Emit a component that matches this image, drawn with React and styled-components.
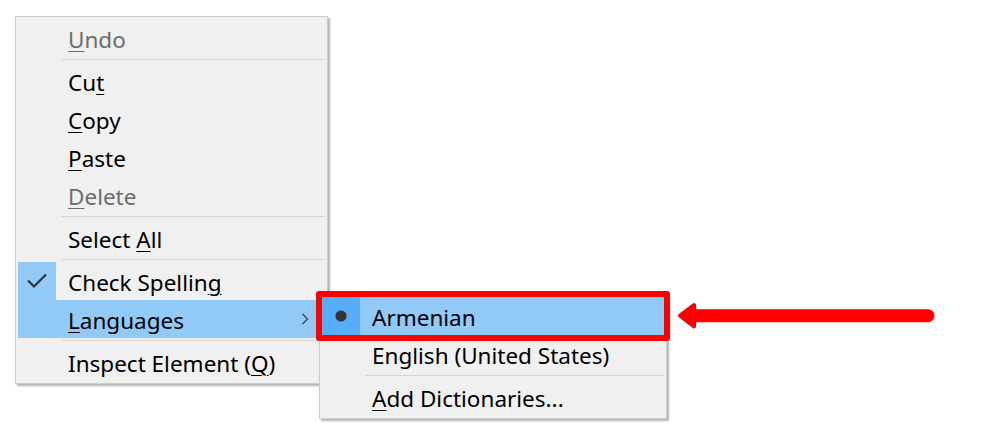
import React from "react";
import styled, { createGlobalStyle } from "styled-components";

const GlobalStyle = createGlobalStyle`
  body {
    margin: 0;
    background: #fff;
    font-family: "Noto Sans", "Open Sans", sans-serif;
  }
`;

const mainItems = [
  { label: "Undo", key: 0, disabled: true },
  { sep: true },
  { label: "Cut", key: 2 },
  { label: "Copy", key: 0 },
  { label: "Paste", key: 0 },
  { label: "Delete", key: 0, disabled: true },
  { sep: true },
  { label: "Select All", key: 7 },
  { sep: true },
  { label: "Check Spelling", key: 13, checked: true },
  { label: "Languages", key: 0, hover: true, submenu: true },
  { sep: true },
  { label: "Inspect Element (Q)", key: 17 },
];

const subItems = [
  { label: "Armenian", radio: true, hover: true, boxed: true },
  { label: "English (United States)" },
  { sep: true },
  { label: "Add Dictionaries...", key: 0 },
];

const Stage = styled.div`
  position: relative;
  width: 984px;
  height: 436px;
  box-sizing: border-box;
  padding: 16px 0 0 15px;
`;

const Menu = styled.div`
  width: 313px;
  box-sizing: border-box;
  padding: 2px;
  background: #f0f0f0;
  border: 1px solid #cccccc;
  box-shadow: 2px 2px 2px rgba(0, 0, 0, 0.3);
`;

const SubMenu = styled(Menu)`
  position: absolute;
  left: 319px;
  top: 294px;
  width: 348px;
`;

const Item = styled.div`
  position: relative;
  display: flex;
  height: 38px;
  background: ${(p) => (p.$hover ? "#91c9f7" : "transparent")};
`;

const Gutter = styled.div`
  flex: none;
  width: 38px;
  display: flex;
  align-items: center;
  justify-content: center;
  background: ${(p) => p.$bg || "transparent"};
`;

const Label = styled.div`
  flex: 1;
  padding: 3px 0 0 12px;
  line-height: 35px;
  font-size: 22.5px;
  white-space: nowrap;
  color: ${(p) => (p.$disabled ? "#6d6d6d" : "#000")};

  u {
    text-underline-offset: 3px;
    text-decoration-thickness: 1px;
  }
`;

const Chevron = styled.div`
  flex: none;
  width: 40px;
  display: flex;
  align-items: center;
  justify-content: center;
`;

const Separator = styled.div`
  height: 1px;
  margin: 2px 0 2px 44px;
  background: #d4d4d4;
`;

const RedBox = styled.div`
  position: absolute;
  inset: -6px;
  border: 6px solid #ff0000;
  border-radius: 3px;
  pointer-events: none;
`;

const Arrow = styled.svg`
  position: absolute;
  left: 670px;
  top: 296px;
`;

const Text = ({ label, accel }) => {
  if (accel === undefined) return label;
  return (
    <>
      {label.slice(0, accel)}
      <u>{label[accel]}</u>
      {label.slice(accel + 1)}
    </>
  );
};

const Check = () => (
  <svg width="22" height="16" viewBox="0 0 22 16">
    <path d="M2 7.5 L8 13.5 L20 1.5" fill="none" stroke="#333" strokeWidth="2.2" />
  </svg>
);

const Dot = () => (
  <svg width="12" height="12" viewBox="0 0 12 12">
    <circle cx="6" cy="6" r="5.6" fill="#333" />
  </svg>
);

const Caret = () => (
  <svg width="8" height="12" viewBox="0 0 8 12">
    <path d="M1.5 1 L6.5 6 L1.5 11" fill="none" stroke="#444" strokeWidth="1.3" />
  </svg>
);

const MenuRows = ({ items }) =>
  items.map((it, i) => {
    if (it.sep) return <Separator key={i} />;
    let gutterBg;
    if (it.checked) gutterBg = "#91c9f7";
    if (it.radio) gutterBg = "#56adf8";
    return (
      <Item key={i} $hover={it.hover}>
        <Gutter $bg={gutterBg}>
          {it.checked && <Check />}
          {it.radio && <Dot />}
        </Gutter>
        <Label $disabled={it.disabled}>
          <Text label={it.label} accel={it.key} />
        </Label>
        {it.submenu && (
          <Chevron>
            <Caret />
          </Chevron>
        )}
        {it.boxed && <RedBox />}
      </Item>
    );
  });

const App = () => {
  return (
    <Stage>
      <GlobalStyle />
      <Menu>
        <MenuRows items={mainItems} />
      </Menu>
      <SubMenu>
        <MenuRows items={subItems} />
      </SubMenu>
      <Arrow width="270" height="40" viewBox="670 296 270 40">
        <line x1="696" y1="315.7" x2="928" y2="315.7" stroke="#ff0000" strokeWidth="13" strokeLinecap="round" />
        <polygon
          points="680,315.7 694,305 694,326.4"
          fill="#ff0000"
          stroke="#ff0000"
          strokeWidth="4"
          strokeLinejoin="round"
        />
      </Arrow>
    </Stage>
  );
};

export default App;
